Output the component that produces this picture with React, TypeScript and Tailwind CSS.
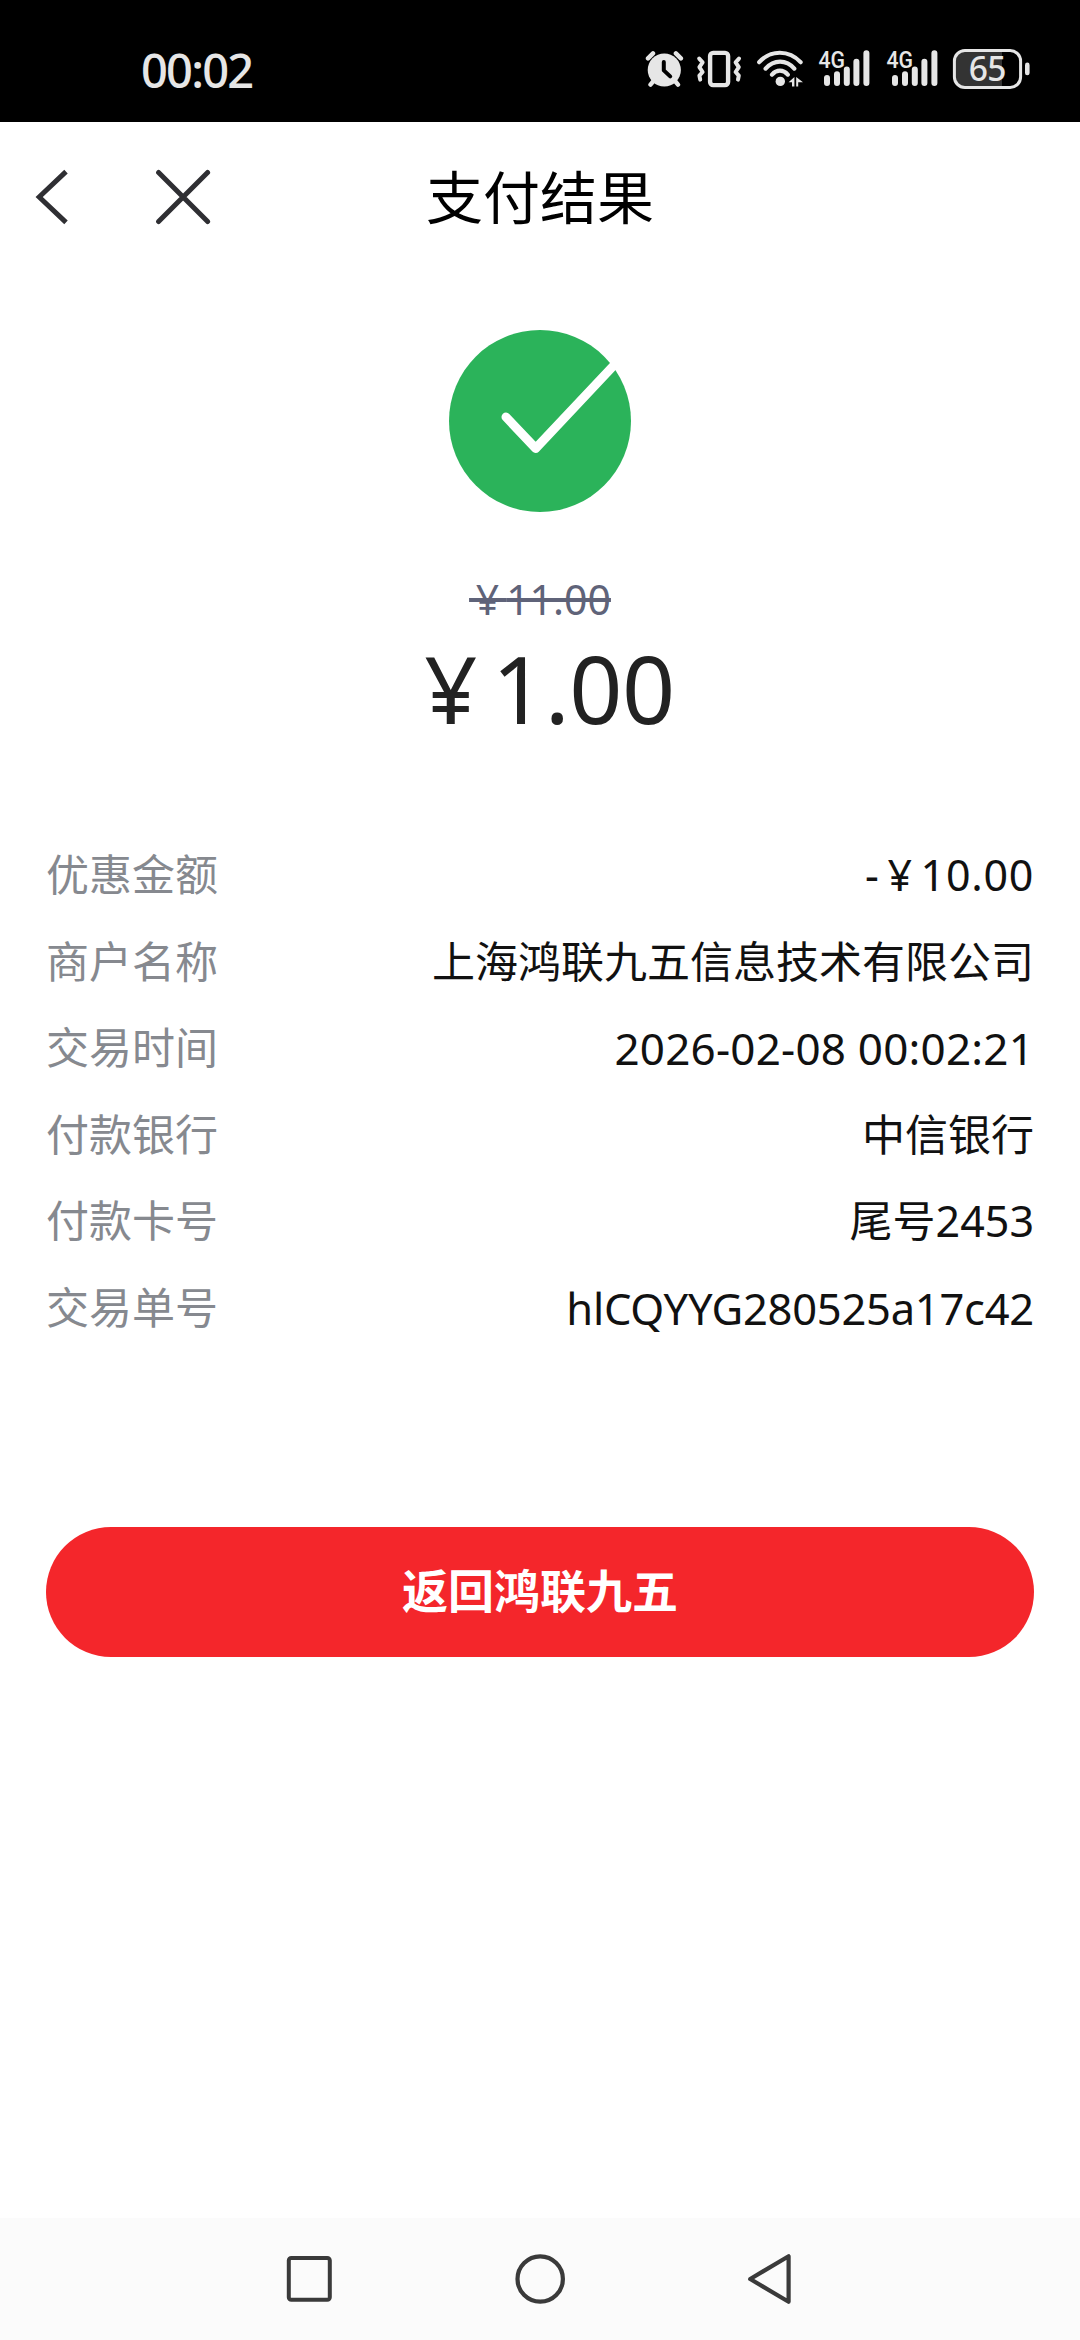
// Thin spaces on both sides give the yen sign its full-width box
const YEN = "\u2009¥\u2009";

const details = [
  { label: "优惠金额", value: `-${YEN}10.00`, style: "text-[43px] tracking-[0.7px]" },
  { label: "商户名称", value: "上海鸿联九五信息技术有限公司", style: "text-[43px]" },
  { label: "交易时间", value: "2026-02-08 00:02:21", style: "text-[44px] tracking-[0.2px]" },
  { label: "付款银行", value: "中信银行", style: "text-[43px]" },
  { label: "付款卡号", value: "尾号2453", style: "text-[43px]" },
  { label: "交易单号", value: "hlCQYYG280525a17c42", style: "text-[43.5px] tracking-[-0.25px]" },
];

function AlarmIcon() {
  return (
    <svg width="40" height="40" viewBox="0 0 40 40" fill="none" strokeLinecap="round">
      <circle cx="19.3" cy="21" r="16.6" fill="#e6e6e6" />
      <path d="M3 9.4 8 4.4M30.9 4.4l5 5M8.5 32l-3 3.6M30 32l3 3.6" stroke="#e6e6e6" strokeWidth="4.4" />
      <path d="M18.8 13v8.4l6.4 6" stroke="#000" strokeWidth="4" strokeLinejoin="round" />
    </svg>
  );
}

function VibrateIcon() {
  return (
    <svg width="46" height="40" viewBox="0 0 46 40" fill="none" stroke="#e6e6e6">
      <rect x="14.1" y="3.9" width="18" height="32.2" rx="3" strokeWidth="4.4" />
      <path
        d="M3.2 9.6 6.6 13.4 3.4 18.2 6.6 23 3.4 26.6 4.2 30.6M43 9.6 39.6 13.4l3.2 4.8-3.2 4.8 3.2 3.6-.8 4"
        strokeWidth="4"
        strokeLinecap="round"
        strokeLinejoin="round"
      />
    </svg>
  );
}

function WifiIcon() {
  return (
    <svg width="48" height="40" viewBox="0 0 48 40" fill="none" stroke="#e6e6e6" strokeWidth="4.2" strokeLinecap="round">
      <path d="M3.2 13.2C14.5 .6 33 .6 44.6 13.2M9.6 19.6c8.3-9.4 20.7-9.4 28.7 0M16 25.6c4.6-5.2 11.2-5.2 15.8 0" />
      <circle cx="24.3" cy="32.4" r="4.7" fill="#e6e6e6" stroke="none" />
      <path d="M32.6 33.2 38.4 28v9.4h-2.4v-4.2zM40.2 28v9.4h2v-4.2H47z" fill="#e6e6e6" stroke="none" />
    </svg>
  );
}

function SignalIcon() {
  return (
    <svg className="overflow-visible" width="56" height="40" viewBox="0 0 56 40" fill="none" stroke="#e6e6e6" strokeWidth="6" strokeLinecap="round">
      <text
        x="2.4"
        y="19"
        fill="#e6e6e6"
        stroke="none"
        fontFamily="Roboto, sans-serif"
        fontWeight="500"
        fontSize="24"
        textLength="26.5"
        lengthAdjust="spacingAndGlyphs"
      >
        4G
      </text>
      <path d="M11 29v5M21 25.2V34M30.8 20.6V34M40.4 12.8V34M50.4 4.2V34" />
    </svg>
  );
}

function BatteryIcon() {
  return (
    <svg className="overflow-visible" width="78" height="40" viewBox="0 0 78 40" fill="none">
      <path d="M13 2.5h37v35H13a10 10 0 0 1-10-10v-15a10 10 0 0 1 10-10z" fill="#333" />
      <rect x="2.4" y="1.6" width="66.2" height="36.8" rx="10.5" stroke="#e6e6e6" strokeWidth="3" />
      <rect x="73" y="13.6" width="4.6" height="12.6" rx="2.3" fill="#e6e6e6" />
      <text x="35.6" y="32" textAnchor="middle" fill="#e6e6e6" fontFamily="'Noto Sans', sans-serif" fontWeight="500" fontSize="33.5" textLength="37.5">
        65
      </text>
    </svg>
  );
}

function StatusBar() {
  return (
    <div className="flex h-[122px] items-center justify-between bg-black pr-[50px] pl-[141px]">
      <span className="pt-[18px] text-[47px] leading-[60px] font-medium tracking-[-1.8px] text-[#e6e6e6]">00:02</span>
      <div className="flex items-center pt-4">
        <AlarmIcon />
        <div className="ml-[11px]">
          <VibrateIcon />
        </div>
        <div className="ml-[14px]">
          <WifiIcon />
        </div>
        <div className="ml-[12px]">
          <SignalIcon />
        </div>
        <div className="ml-[12px]">
          <SignalIcon />
        </div>
        <div className="ml-[12px]">
          <BatteryIcon />
        </div>
      </div>
    </div>
  );
}

function Header() {
  return (
    <header className="grid h-[150px] grid-cols-3 items-center">
      <div className="flex items-center gap-[84px] pl-[34px]">
        <svg width="36" height="56" viewBox="0 0 36 56" fill="none" stroke="#2f2f33" strokeWidth="5">
          <path d="M32 2.6 5.2 28 32 53.4" />
        </svg>
        <svg width="60" height="56" viewBox="0 0 60 56" fill="none" stroke="#2f2f33" strokeWidth="5" strokeLinecap="round">
          <path d="m4.6 3.4 49 49.2m0-49.2-49 49.2" />
        </svg>
      </div>
      <h1 className="text-center text-[57px] leading-[80px] whitespace-nowrap text-black">支付结果</h1>
    </header>
  );
}

function NavBar() {
  return (
    <nav className="flex h-[122px] items-center justify-between bg-[#fbfbfb] px-[284px]">
      <svg width="50" height="54" viewBox="0 0 50 54" fill="none" stroke="#3a3a3a" strokeWidth="4">
        <rect x="4.8" y="6" width="41" height="41.8" rx="2.5" />
      </svg>
      <svg width="54" height="54" viewBox="0 0 54 54" fill="none" stroke="#3a3a3a" strokeWidth="4.2">
        <circle cx="27.2" cy="27" r="22.7" />
      </svg>
      <svg width="50" height="54" viewBox="0 0 50 54" fill="none" stroke="#3a3a3a" strokeWidth="4.2" strokeLinejoin="round">
        <path d="M42.6 4.2v45.6L4.2 27z" />
      </svg>
    </nav>
  );
}

export default function App() {
  return (
    <div className="flex h-[2340px] w-[1080px] flex-col bg-white font-['Noto_Sans','Noto_Sans_CJK_SC',sans-serif]">
      <StatusBar />
      <Header />

      <main className="flex flex-1 flex-col">
        <div className="flex flex-col items-center pt-[58px]">
          <svg width="182" height="182" viewBox="0 0 182 182" fill="none">
            <circle cx="91" cy="91" r="91" fill="#2bb35a" />
            <path d="m57 87 29.7 31.4L168 32" stroke="#fff" strokeWidth="9" strokeLinecap="round" strokeLinejoin="round" />
          </svg>
          <div className="mt-[57px] text-[41px] leading-[60px] text-[#5f6379] line-through decoration-4">
            {YEN}11.00
          </div>
          <div className="mt-1 pl-1 text-[93px] leading-[110px] tracking-[-0.4px] text-[#222]">{YEN}1.00</div>
        </div>

        <dl className="mt-[89px] px-[46px] leading-[86.5px]">
          {details.map((d) => (
            <div key={d.label} className="flex h-[86.5px] justify-between">
              <dt className="text-[43px] text-[#86898f]">{d.label}</dt>
              <dd className={`text-[#111] ${d.style}`}>{d.value}</dd>
            </div>
          ))}
        </dl>

        <button className="mx-[46px] mt-[176px] h-[130px] rounded-full bg-[#f4262b] pb-[5px] text-[46px] leading-[60px] font-bold text-white">
          返回鸿联九五
        </button>
      </main>

      <NavBar />
    </div>
  );
}
